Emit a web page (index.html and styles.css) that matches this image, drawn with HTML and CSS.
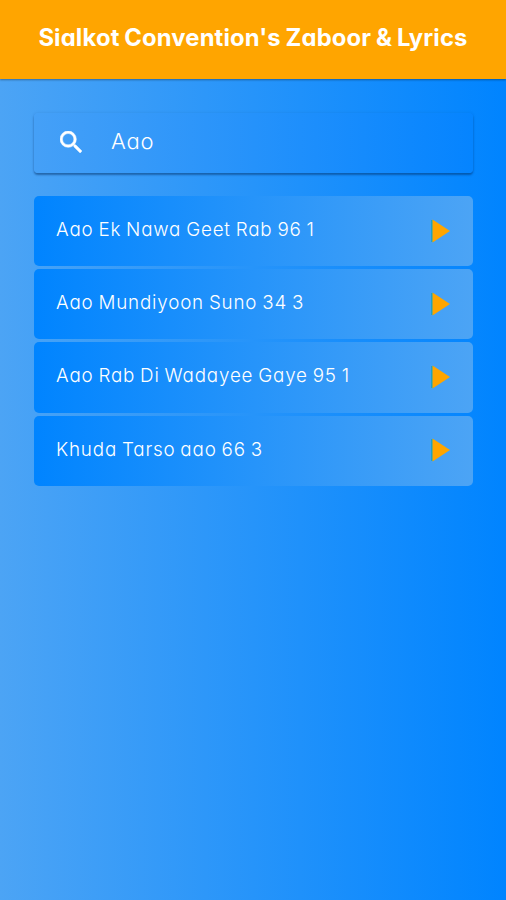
FILE: index.html
```html
<!DOCTYPE html>
<html lang="en">

<head>
    <meta charset="utf-8">
    <title>Sialkot Convention's Zaboor &amp; Lyrics</title>
    <link rel="stylesheet" href="styles.css">
</head>

<body>
    <header class="header">
        <h1 class="title">Sialkot Convention's Zaboor &amp; Lyrics</h1>
    </header>

    <main class="content">
        <div class="search">
            <svg class="search-icon" viewBox="3 3 17.5 17.5">
                <path d="M15.5 14h-.79l-.28-.27A6.471 6.471 0 0 0 16 9.5 6.5 6.5 0 1 0 9.5 16c1.61 0 3.09-.59 4.23-1.57l.27.28v.79l5 4.99L20.49 19l-4.99-5zm-6 0C7.01 14 5 11.99 5 9.5S7.01 5 9.5 5 14 7.01 14 9.5 11.99 14 9.5 14z" />
            </svg>
            <span class="search-text">Aao</span>
        </div>

        <ul class="songs">
            <li class="song">
                <span class="name">Aao Ek Nawa Geet Rab 96 1</span>
                <svg class="play" viewBox="0 0 19 24"><path class="edge" d="M0 1h3v22H0z" /><path d="M1.5 0.5L19 12L1.5 23.5z" /></svg>
            </li>
            <li class="song">
                <span class="name">Aao Mundiyoon Suno 34 3</span>
                <svg class="play" viewBox="0 0 19 24"><path class="edge" d="M0 1h3v22H0z" /><path d="M1.5 0.5L19 12L1.5 23.5z" /></svg>
            </li>
            <li class="song">
                <span class="name">Aao Rab Di Wadayee Gaye 95 1</span>
                <svg class="play" viewBox="0 0 19 24"><path class="edge" d="M0 1h3v22H0z" /><path d="M1.5 0.5L19 12L1.5 23.5z" /></svg>
            </li>
            <li class="song">
                <span class="name">Khuda Tarso aao 66 3</span>
                <svg class="play" viewBox="0 0 19 24"><path class="edge" d="M0 1h3v22H0z" /><path d="M1.5 0.5L19 12L1.5 23.5z" /></svg>
            </li>
        </ul>
    </main>
</body>

</html>
```
FILE: styles.css
```css
* {
    box-sizing: border-box;
}

body {
    margin: 0;
    min-height: 100vh;
    font-family: Inter, "Open Sans", sans-serif;
    /* single-storey a */
    font-feature-settings: "cv11";
    color: #fff;
    background: linear-gradient(to right, #4ca4f5, #0084ff);
}

.header {
    height: 79px;
    padding-top: 23px;
    background: #ffa500;
    box-shadow: 0 1px 2px rgba(0, 0, 0, 0.35);
}

.title {
    margin: 0;
    font-size: 23.8px;
    line-height: 30px;
    font-weight: 700;
    letter-spacing: 0.15px;
    word-spacing: -1px;
    text-align: center;
    white-space: nowrap;
}

.content {
    padding: 34px 33px 0 34px;
}

.search {
    display: flex;
    align-items: center;
    height: 60px;
    padding-left: 26px;
    border-radius: 4px;
    background: linear-gradient(to right, #45a0f7, #0584ff);
    box-shadow: 0 2px 2px rgba(0, 40, 90, 0.45), 0 0 3px rgba(0, 60, 130, 0.15);
}

.search-icon {
    width: 22px;
    height: 22px;
    margin-bottom: 2px;
    fill: #fff;
    stroke: #fff;
    stroke-width: 0.4;
}

.search-text {
    margin-left: 29px;
    padding-bottom: 5px;
    font-size: 22px;
    line-height: 28px;
    font-weight: 300;
    letter-spacing: 0.8px;
}

.songs {
    display: grid;
    gap: 3px;
    margin: 23px 0 0;
    padding: 0;
    list-style: none;
}

.song {
    display: flex;
    justify-content: space-between;
    align-items: center;
    height: 70.2px;
    padding: 0 23px 0 22px;
    border-radius: 5px;
    background: linear-gradient(to right, #0084ff, #4ca4f5);
}

.name {
    padding-bottom: 2px;
    font-size: 18.8px;
    line-height: 26px;
    font-weight: 300;
    letter-spacing: 0.83px;
    word-spacing: -1.2px;
    white-space: nowrap;
}

.play {
    width: 19px;
    height: 24px;
    margin-bottom: 1px;
    fill: #ffa500;
}

.play .edge {
    fill: #1fa3c4;
}
```
